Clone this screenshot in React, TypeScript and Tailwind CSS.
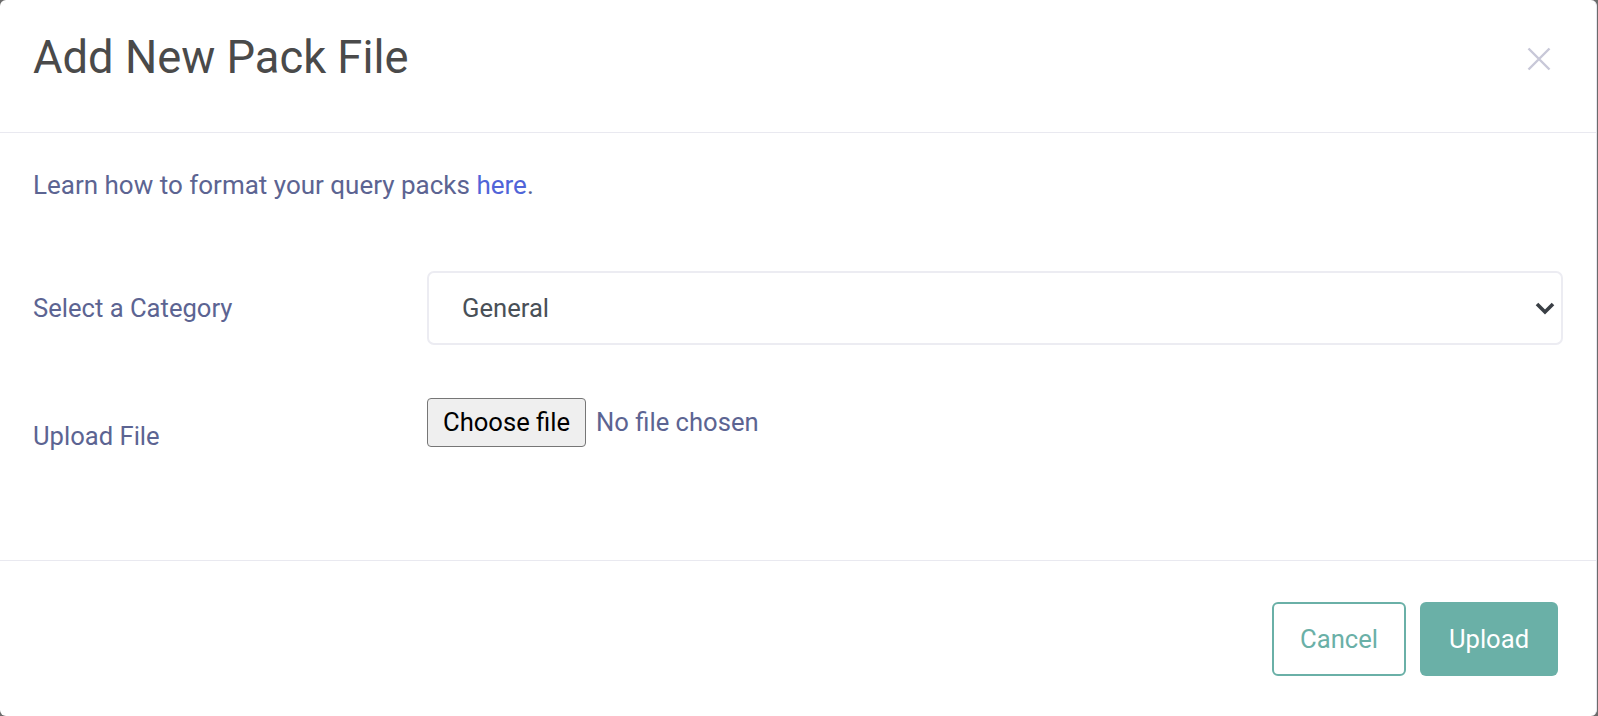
import React from "react";

export default function App() {
  return (
    <div className="w-[1598px] h-[716px] bg-[#6b6b6b] overflow-hidden" style={{ fontFamily: "Roboto, 'Liberation Sans', sans-serif" }}>
      <div className="w-[1597px] h-[716px] bg-white rounded-[6px] border-r border-[#e6e6ee] flex flex-col">
        {/* Header */}
        <div className="h-[133px] shrink-0 border-b border-[#e9e9f0] flex items-start justify-between pl-[33px] pr-[45px]">
          <h1 className="pt-[31px] text-[45.3px] leading-[54px] text-[#4a4a4a] font-normal">Add New Pack File</h1>
          <button className="mt-[47px] w-[24px] h-[24px] flex items-center justify-center" aria-label="Close">
            <svg width="24" height="24" viewBox="0 0 24 24">
              <path d="M1.5 1.5 L22.5 22.5 M22.5 1.5 L1.5 22.5" stroke="#c8c8d8" strokeWidth="2.4" fill="none" />
            </svg>
          </button>
        </div>

        {/* Body */}
        <div className="flex-1 pl-[33px] pr-[33px] pt-[34px]">
          <p className="text-[26px] leading-[36px] text-[#5c6492]">
            Learn how to format your query packs <span className="text-[#5064d8]">here</span>.
          </p>

          <div className="mt-[68px] flex items-center">
            <label className="w-[394px] shrink-0 text-[25.6px] leading-[36px] text-[#5c6492]">Select a Category</label>
            <div className="flex-1 h-[74px] border-2 border-[#ececf2] rounded-[7px] flex items-center justify-between pl-[33px] pr-[6px]">
              <span className="text-[25.6px] text-[#495057]">General</span>
              <svg width="20" height="14" viewBox="0 0 20 14">
                <path d="M2 3 L10 11 L18 3" stroke="#3a3f45" strokeWidth="3.6" fill="none" />
              </svg>
            </div>
          </div>

          <div className="mt-[53px] flex items-start">
            <label className="w-[394px] shrink-0 pt-[20px] text-[25.6px] leading-[36px] text-[#5c6492]">Upload File</label>
            <div className="flex items-center">
              <div className="h-[49px] px-[15px] bg-[#efefef] border-[1.5px] border-[#767676] rounded-[4px] flex items-center text-[25.6px] text-black">Choose file</div>
              <span className="ml-[10px] text-[25.6px] text-[#5c6492]">No file chosen</span>
            </div>
          </div>
        </div>

        {/* Footer */}
        <div className="h-[156px] shrink-0 border-t border-[#e9e9f0] flex items-start justify-end pr-[38px] pt-[41px] gap-[14px]">
          <button className="w-[134px] h-[74px] border-2 border-[#6ab0a7] rounded-[6px] text-[25.6px] text-[#6ab0a7]">Cancel</button>
          <button className="w-[138px] h-[74px] bg-[#6ab0a7] rounded-[6px] text-[25.6px] text-white">Upload</button>
        </div>
      </div>
    </div>
  );
}
